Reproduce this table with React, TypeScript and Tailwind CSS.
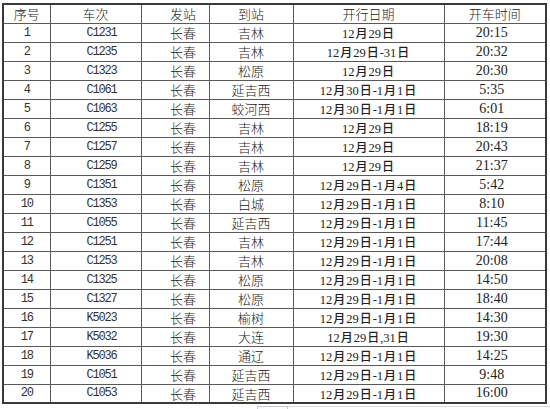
const rows: [string, string, string, string, string, string][] = [
  ['1', 'C1231', '长春', '吉林', '12月29日', '20:15'],
  ['2', 'C1235', '长春', '吉林', '12月29日-31日', '20:32'],
  ['3', 'C1323', '长春', '松原', '12月29日', '20:30'],
  ['4', 'C1061', '长春', '延吉西', '12月30日-1月1日', '5:35'],
  ['5', 'C1063', '长春', '蛟河西', '12月30日-1月1日', '6:01'],
  ['6', 'C1255', '长春', '吉林', '12月29日', '18:19'],
  ['7', 'C1257', '长春', '吉林', '12月29日', '20:43'],
  ['8', 'C1259', '长春', '吉林', '12月29日', '21:37'],
  ['9', 'C1351', '长春', '松原', '12月29日-1月4日', '5:42'],
  ['10', 'C1353', '长春', '白城', '12月29日-1月1日', '8:10'],
  ['11', 'C1055', '长春', '延吉西', '12月29日-1月1日', '11:45'],
  ['12', 'C1251', '长春', '吉林', '12月29日-1月1日', '17:44'],
  ['13', 'C1253', '长春', '吉林', '12月29日-1月1日', '20:08'],
  ['14', 'C1325', '长春', '松原', '12月29日-1月1日', '14:50'],
  ['15', 'C1327', '长春', '松原', '12月29日-1月1日', '18:40'],
  ['16', 'K5023', '长春', '榆树', '12月29日-1月1日', '14:30'],
  ['17', 'K5032', '长春', '大连', '12月29日,31日', '19:30'],
  ['18', 'K5036', '长春', '通辽', '12月29日-1月1日', '14:25'],
  ['19', 'C1051', '长春', '延吉西', '12月29日-1月1日', '9:48'],
  ['20', 'C1053', '长春', '延吉西', '12月29日-1月1日', '16:00'],
];

const headers = ['序号', '车次', '发站', '到站', '开行日期', '开车时间'];

// split date into digit runs and CJK runs so the CJK part can sit a little heavier
function DateText({ value }: { value: string }) {
  const parts = value.match(/[0-9,\-]+|[^0-9,\-]+/g) ?? [];
  return (
    <>
      {parts.map((p, i) =>
        /[0-9]/.test(p) || p === '-' || p === ',' ? (
          <span key={i} className="font-['Liberation_Serif',serif] text-[12.5px]">
            {p}
          </span>
        ) : (
          <span key={i} className="mx-[1px] font-['Noto_Sans_CJK_SC',sans-serif] text-[12px] font-medium">
            {p}
          </span>
        )
      )}
    </>
  );
}

export default function App() {
  const cell = 'border border-[#5a5a5a] h-[19px] p-0 text-center align-middle leading-none';
  const cjk = "font-['Noto_Sans_CJK_SC',sans-serif] text-[13px] font-light text-[#1a1a1a]";
  const mono = "font-['Liberation_Mono',monospace] text-[12px] tracking-[-1.2px] text-[#333]";

  return (
    <div className="w-[550px] h-[409px] overflow-hidden bg-white pl-[2px] pt-[3px] text-[#222]">
      <table className="table-fixed border-collapse border-2 border-[#3a3a3a] w-[543px]">
        <colgroup>
          <col className="w-[47px]" />
          <col className="w-[91px]" />
          <col className="w-[68px]" />
          <col className="w-[84px]" />
          <col className="w-[151px]" />
          <col className="w-[102px]" />
        </colgroup>
        <thead>
          <tr>
            {headers.map((h, i) => (
              <th key={h} className={`${cell} ${cjk} ${i === 2 ? 'pl-[16px]' : ''}`}>
                {h}
              </th>
            ))}
          </tr>
        </thead>
        <tbody>
          {rows.map(r => (
            <tr key={r[0]}>
              <td className={`${cell} ${mono}`}>{r[0]}</td>
              <td className={`${cell} ${mono} pl-[12px]`}>{r[1]}</td>
              <td className={`${cell} ${cjk} pl-[16px]`}>{r[2]}</td>
              <td className={`${cell} ${cjk}`}>{r[3]}</td>
              <td className={cell}>
                <DateText value={r[4]} />
              </td>
              <td className={`${cell} font-['Liberation_Serif',serif] text-[14px] pr-[6px]`}>{r[5]}</td>
            </tr>
          ))}
        </tbody>
      </table>
      <div className="flex">
        <div className="ml-[255px] mt-[2px] w-[31px] h-[6px] border-l border-r border-t border-[#c8c8c8]" />
        <div className="mt-[2px] flex-1 border-t border-[#dcdcdc]" />
      </div>
    </div>
  );
}
